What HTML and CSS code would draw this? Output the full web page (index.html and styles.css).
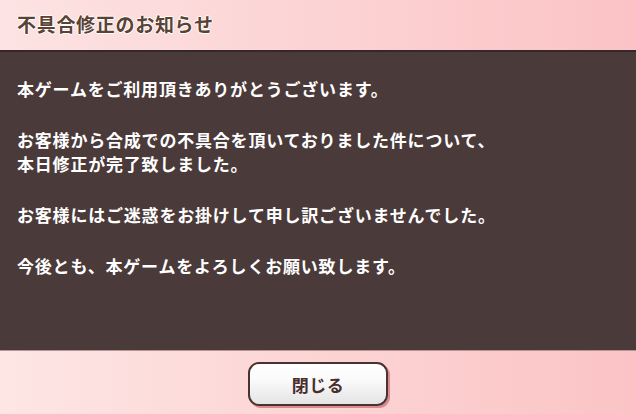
FILE: index.html
```html
<!DOCTYPE html>
<html lang="ja">
<head>
    <meta charset="UTF-8">
    <title>不具合修正のお知らせ</title>
    <link rel="stylesheet" href="styles.css">
</head>
<body>
    <div class="dialog">
        <div class="head">
            <h1>不具合修正のお知らせ</h1>
        </div>
        <div class="body">
            <p>本ゲームをご利用頂きありがとうございます。</p>
            <p>お客様から合成での不具合を頂いておりました件について、<br>本日修正が完了致しました。</p>
            <p>お客様にはご迷惑をお掛けして申し訳ございませんでした。</p>
            <p>今後とも、本ゲームをよろしくお願い致します。</p>
        </div>
        <div class="foot">
            <button class="close">閉じる</button>
        </div>
    </div>
</body>
</html>
```

FILE: styles.css
```css
* {
    box-sizing: border-box;
    margin: 0;
    padding: 0;
}

html, body {
    width: 636px;
    height: 414px;
    overflow: hidden;
}

body {
    font-family: "Noto Sans CJK JP", "Noto Sans", sans-serif;
    font-weight: bold;
}

.dialog {
    display: flex;
    flex-direction: column;
    height: 414px;
}

.head {
    height: 50px;
    padding: 0 17px;
    display: flex;
    align-items: center;
    background: linear-gradient(to right, #fde3e3, #fbc3c5);
}

.head h1 {
    font-size: 19px;
    line-height: 24px;
    letter-spacing: 0.7px;
    color: #5a4234;
    text-shadow: 1px 0 0 #fff, -1px 0 0 #fff, 0 1px 0 #fff, 0 -1px 0 #fff;
    margin-top: -2px;
}

.body {
    height: 301px;
    background-color: #4b3a3a;
    border-top: 2px solid #35272a;
    border-bottom: 1px solid #b99494;
    padding: 25px 17px 0;
    color: #fff;
    font-size: 17px;
    line-height: 24px;
    letter-spacing: 0.8px;
}

.body p {
    margin-bottom: 27px;
}

.foot {
    flex: 1;
    display: flex;
    justify-content: center;
    align-items: flex-start;
    padding-top: 11px;
    background: linear-gradient(to right, #fde6e4, #fbc3c5);
}

.close {
    width: 140px;
    height: 44px;
    border: 2px solid #4a3232;
    border-radius: 11px;
    background: linear-gradient(#ffffff, #fafafa 40%, #e4e4e4);
    box-shadow: 2px 2px 0 #d88a8c;
    font-family: "Noto Sans CJK JP", sans-serif;
    font-weight: bold;
    font-size: 17px;
    letter-spacing: 0.5px;
    color: #4a2e2e;
}
```
